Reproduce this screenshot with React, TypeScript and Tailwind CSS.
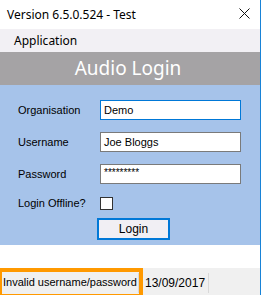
import React from "react";

const sans = { fontFamily: '"Liberation Sans", Arial, sans-serif' } as const;

export default function App() {
  return (
    <div className="flex w-[262px] h-[295px] bg-white overflow-hidden">
      <div className="flex flex-col w-[260px] h-full">
        {/* Title bar */}
        <div className="h-[29px] flex items-center justify-between pl-[7px] pr-[10px] bg-white">
          <span className="text-[12px] text-black" style={{ fontFamily: '"Noto Sans", "Open Sans", sans-serif' }}>
            Version 6.5.0.524 - Test
          </span>
          <svg width="11" height="11" viewBox="0 0 11 11" className="mt-[-2px]">
            <path d="M0.5 0.5 L10.5 10.5 M10.5 0.5 L0.5 10.5" stroke="#111" strokeWidth="1" />
          </svg>
        </div>
        {/* Menu bar */}
        <div className="h-[23px] flex items-center pl-[14px] bg-[#f2f0f4]">
          <span className="text-[12px] text-black" style={{ fontFamily: '"Noto Sans", "Open Sans", sans-serif' }}>
            Application
          </span>
        </div>
        {/* Header */}
        <div className="h-[33px] flex items-center justify-center pr-[4px] bg-[#a5a3a5]">
          <span className="text-[19px] text-white leading-none" style={{ fontFamily: '"Noto Sans", "Open Sans", sans-serif' }}>
            Audio Login
          </span>
        </div>
        {/* Form */}
        <div className="h-[160px] bg-[#a6c3ea] pt-[15px] flex flex-col" style={sans}>
          <div className="flex items-center h-[20px]">
            <span className="w-[100px] pl-[18px] text-[11px] text-black">Organisation</span>
            <div className="w-[141px] h-[20px] border border-[#0078d7] bg-white flex items-center pl-[3px] text-[11px] text-black">Demo</div>
          </div>
          <div className="flex items-center h-[20px] mt-[12px]">
            <span className="w-[100px] pl-[18px] text-[11px] text-black">Username</span>
            <div className="w-[141px] h-[20px] border border-[#7a7a7a] bg-white flex items-center pl-[3px] text-[11px] text-black">Joe Bloggs</div>
          </div>
          <div className="flex items-center h-[20px] mt-[12px]">
            <span className="w-[100px] pl-[18px] text-[11px] text-black">Password</span>
            <div className="w-[141px] h-[20px] border border-[#7a7a7a] bg-white flex items-start pl-[3px] text-[10px] leading-none pt-[3px] text-black">*********</div>
          </div>
          <div className="flex items-center h-[14px] mt-[12px]">
            <span className="w-[100px] pl-[18px] text-[11px] text-black">Login Offline?</span>
            <div className="w-[13px] h-[13px] border border-[#333] bg-white" />
          </div>
          <div className="flex mt-[8px] pl-[97px]">
            <div className="w-[73px] h-[22px] border-2 border-[#0078d7] bg-[#f1eff4] flex items-center justify-center text-[12px] text-black">Login</div>
          </div>
        </div>
        {/* White spacer */}
        <div className="h-[23px] bg-white" />
        {/* Status bar */}
        <div className="relative h-[27px] bg-[#f0f0f0] flex items-center pt-[2px]" style={sans}>
          <span className="w-[138px] pl-[3px] text-[11px] whitespace-nowrap text-black">Invalid username/password</span>
          <div className="w-[1px] h-[20px] bg-[#d9d9d9]" />
          <span className="pl-[6px] w-[69px] text-[12px] whitespace-nowrap text-black">13/09/2017</span>
          <div className="w-[1px] h-[20px] bg-[#d9d9d9]" />
          <div className="absolute left-0 top-0 w-[143px] h-[30px] border-[4px] border-l-[2px] border-[#ff9900]" />
        </div>
      </div>
      <div className="w-px h-full bg-[#1883d7]" />
      <div className="w-px h-full bg-white" />
    </div>
  );
}
